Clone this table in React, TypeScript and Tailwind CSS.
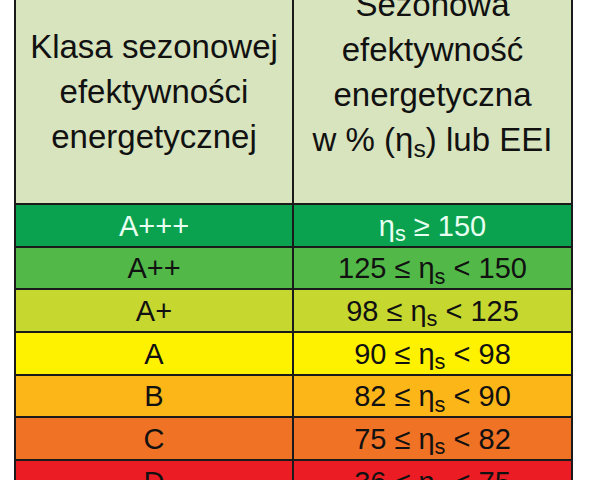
const rows = [
  { cls: "A+++", range: <>η<sub>s</sub> ≥ 150</>, bg: "bg-[#0aa24f]", text: "text-[#e6fff0]" },
  { cls: "A++", range: <>125 ≤ η<sub>s</sub> &lt; 150</>, bg: "bg-[#52b848]", text: "text-[#111]" },
  { cls: "A+", range: <>98 ≤ η<sub>s</sub> &lt; 125</>, bg: "bg-[#c6d72f]", text: "text-[#111]" },
  { cls: "A", range: <>90 ≤ η<sub>s</sub> &lt; 98</>, bg: "bg-[#fff200]", text: "text-[#111]" },
  { cls: "B", range: <>82 ≤ η<sub>s</sub> &lt; 90</>, bg: "bg-[#fdb618]", text: "text-[#111]" },
  { cls: "C", range: <>75 ≤ η<sub>s</sub> &lt; 82</>, bg: "bg-[#f07224]", text: "text-[#111]" },
  { cls: "D", range: <>36 ≤ η<sub>s</sub> &lt; 75</>, bg: "bg-[#ec1c24]", text: "text-[#111]" },
]

export default function App() {
  return (
    <div
      className="h-[480px] w-[590px] overflow-hidden bg-white"
      style={{ fontFamily: '"Liberation Sans", Arial, sans-serif' }}
    >
      <div className="ml-[14px] w-[559px] border-x-2 border-[#1a1a1a]">
        {/* naglowek */}
        <div className="grid grid-cols-[278px_277px] text-[33px] leading-[45px] text-[#111]">
          <div className="flex h-[205px] flex-col items-center justify-end border-r-2 border-b-2 border-[#1a1a1a] bg-[#d8e4bd] pb-[44px] text-center">
            <span>Klasa sezonowej</span>
            <span>efektywności</span>
            <span>energetycznej</span>
          </div>
          <div className="flex h-[205px] flex-col items-center justify-end border-b-2 border-[#1a1a1a] bg-[#d8e4bd] pb-[41px] text-center">
            <span>Sezonowa</span>
            <span>efektywność</span>
            <span>energetyczna</span>
            <span>
              w % (η<sub>s</sub>) lub EEI
            </span>
          </div>
        </div>

        {/* klasy */}
        {rows.map((r) => (
          <div key={r.cls} className={`grid grid-cols-[278px_277px] text-[29px] ${r.bg} ${r.text}`}>
            <div className="flex h-[42.67px] items-center justify-center border-r-2 border-b-2 border-[#1a1a1a] pt-[2px]">
              {r.cls}
            </div>
            <div className="flex h-[42.67px] items-center justify-center border-b-2 border-[#1a1a1a] pt-[2px]">
              <span>{r.range}</span>
            </div>
          </div>
        ))}
      </div>
    </div>
  )
}
